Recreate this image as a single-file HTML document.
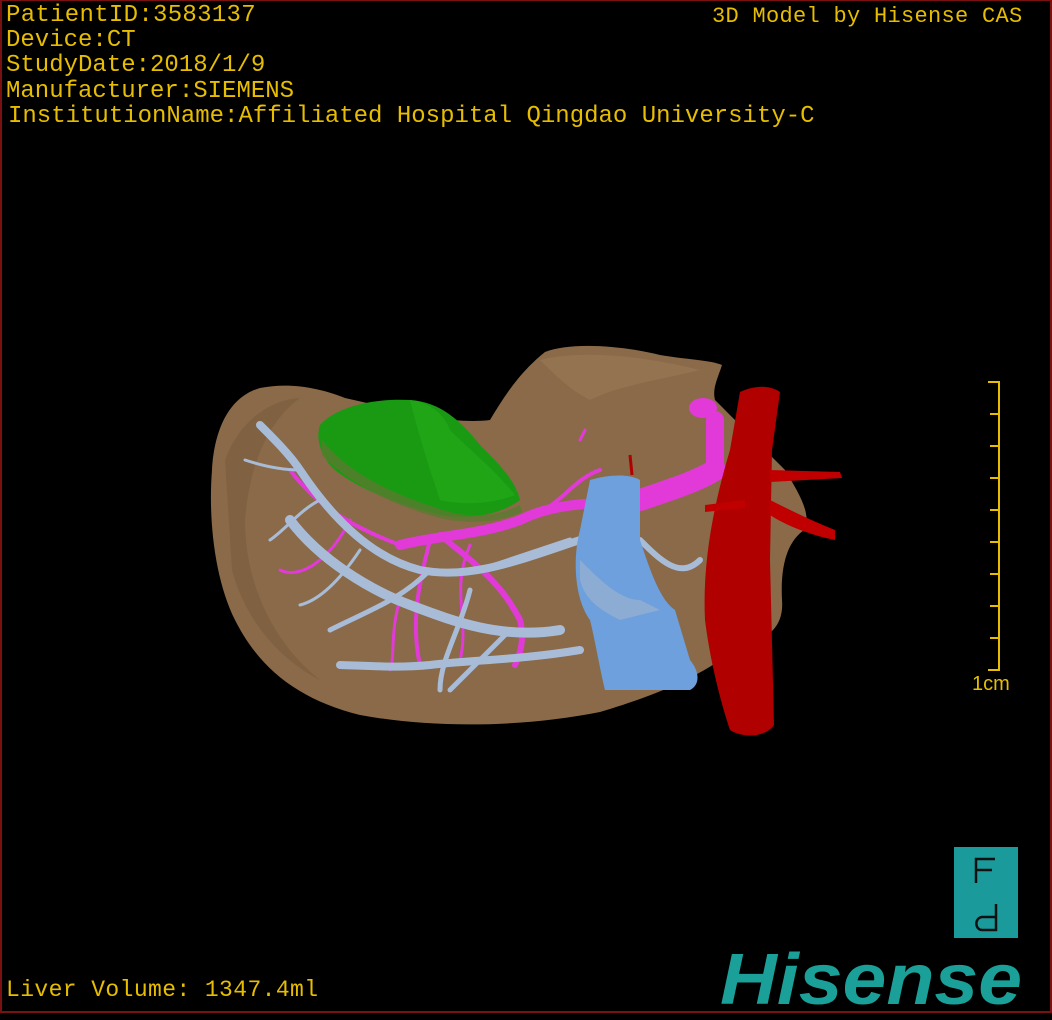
<!DOCTYPE html>
<html><head><style>
html,body{margin:0;padding:0;background:#000;}
#w{position:relative;width:1052px;height:1020px;overflow:hidden;background:#000;}
#f{position:absolute;left:0;top:0;width:1048px;height:1010px;border:2px solid #7a1010;border-top:1px solid #7a1010;}
.t{position:absolute;font-family:"Liberation Mono",monospace;color:#e6bd00;font-size:24px;line-height:25px;white-space:pre;}
</style></head><body><div id="w">
<svg width="1052" height="1020" style="position:absolute;left:0;top:0">
<path d="M212,470 C215,420 235,395 260,388 C290,382 320,388 345,398 C400,410 450,425 490,420 C505,395 520,372 545,352 C570,342 620,345 660,355 C690,360 710,360 722,365 C718,378 712,388 715,400 C740,425 765,450 785,470 C800,495 812,515 804,530 C790,540 780,560 782,600 C784,625 770,640 740,645 C700,680 640,700 600,712 C520,728 430,728 360,715 C300,700 260,670 235,620 C215,580 208,520 212,470 Z" fill="#8a6a48"/>
<path d="M225,460 C240,420 270,400 300,398 C270,420 250,460 245,520 C245,580 270,640 320,680 C280,660 245,620 232,570 Z" fill="#7a5c3e" opacity="0.6"/>
<path d="M540,360 C580,350 640,355 700,370 C660,380 620,385 590,400 C570,390 555,375 540,360Z" fill="#9a7a56" opacity="0.6"/>
<path d="M320,425 C335,408 370,398 410,400 C440,402 460,420 480,445 C500,465 515,480 520,500 C500,515 470,520 440,515 C400,505 360,490 335,470 C322,458 315,440 320,425 Z" fill="#1a9a12"/>
<path d="M410,400 C430,402 445,415 450,430 C470,450 495,470 515,495 C490,505 460,505 440,500 C430,470 420,440 410,400Z" fill="#20a818" opacity="0.8"/>
<path d="M322,440 C345,470 390,495 450,512 C470,518 500,516 520,505 L522,512 C500,522 470,525 440,518 C390,505 345,480 322,455Z" fill="#5a7a30" opacity="0.8"/>
<g stroke="#e23ad8" fill="none" stroke-linecap="round">
<path d="M640,500 C670,490 700,480 715,470" stroke-width="22"/>
<path d="M715,470 L715,420" stroke-width="18"/>
<ellipse cx="703" cy="408" rx="14" ry="10" fill="#e23ad8" stroke="none"/>
<path d="M640,500 C600,505 560,500 520,520 C480,535 440,535 400,545" stroke-width="10"/>
<path d="M440,535 C470,560 500,580 520,620 C525,640 520,655 515,665" stroke-width="6"/>
<path d="M430,540 C420,580 410,620 420,665" stroke-width="4"/>
<path d="M400,545 C360,530 320,510 290,470" stroke-width="4"/>
<path d="M470,545 C450,590 470,620 460,660" stroke-width="3"/>
<path d="M520,520 C560,510 570,480 600,470" stroke-width="4"/>
<path d="M350,520 C330,560 300,580 280,570" stroke-width="3"/>
<path d="M400,600 C390,630 395,660 390,670" stroke-width="3"/>
<path d="M580,440 L585,430" stroke-width="3"/>
</g>
<g stroke="#a8bcd8" fill="none" stroke-linecap="round">
<path d="M580,540 C520,560 470,580 420,570 C380,560 340,530 300,470 C290,455 275,440 260,425" stroke-width="8"/>
<path d="M560,630 C500,640 450,620 410,605 C370,590 320,560 290,520" stroke-width="10"/>
<path d="M580,650 C520,660 470,660 430,665 C400,668 370,666 340,665" stroke-width="8"/>
<path d="M430,570 C400,600 370,610 330,630" stroke-width="5"/>
<path d="M470,590 C460,630 440,660 440,690" stroke-width="5"/>
<path d="M510,630 C490,650 470,670 450,690" stroke-width="5"/>
<path d="M300,470 C280,470 260,465 245,460" stroke-width="3"/>
<path d="M320,500 C300,510 285,530 270,540" stroke-width="3"/>
<path d="M360,550 C340,580 320,600 300,605" stroke-width="3"/>
<path d="M480,570 C510,560 540,550 570,540" stroke-width="5"/>
<path d="M640,540 C660,560 680,580 700,560" stroke-width="6"/>
</g>
<path d="M590,480 C610,474 630,474 640,480 L640,540 C650,570 660,600 675,610 L690,660 C700,672 700,685 690,690 L605,690 C600,670 595,640 590,620 C575,600 572,560 580,530 Z" fill="#6da0dc"/>
<path d="M580,560 C600,580 620,600 640,600 L660,610 L620,620 C600,610 585,600 580,580Z" fill="#9ab0d0" opacity="0.7"/>
<path d="M740,392 C755,385 770,385 780,392 L772,450 L770,560 L774,725 C765,738 742,738 730,730 C720,700 710,660 705,620 C702,560 715,500 730,450 Z" fill="#b00000"/>
<path d="M770,470 L840,472 L842,478 L770,482Z" fill="#c00000"/>
<path d="M770,500 C790,510 810,520 835,530 L835,540 C810,535 785,525 770,515Z" fill="#c00000"/>
<path d="M705,505 L745,500 L745,508 L705,512Z" fill="#c00000"/>
<path d="M630,455 L632,475" stroke="#b00000" stroke-width="3"/>
<g stroke="#e6bd00" stroke-width="2">
<line x1="999" y1="381" x2="999" y2="671"/>
<line x1="988" y1="382" x2="999" y2="382"/>
<line x1="990" y1="414" x2="999" y2="414"/>
<line x1="990" y1="446" x2="999" y2="446"/>
<line x1="990" y1="478" x2="999" y2="478"/>
<line x1="990" y1="510" x2="999" y2="510"/>
<line x1="990" y1="542" x2="999" y2="542"/>
<line x1="990" y1="574" x2="999" y2="574"/>
<line x1="990" y1="606" x2="999" y2="606"/>
<line x1="990" y1="638" x2="999" y2="638"/>
<line x1="988" y1="670" x2="999" y2="670"/>
</g>
<text x="972" y="690" font-family="Liberation Sans,sans-serif" font-size="20" fill="#e6bd00">1cm</text>
<rect x="954" y="847" width="64" height="91" fill="#1a9a9a"/>
<g stroke="#111" stroke-width="2.5" fill="none">
<path d="M976,883 L976,859 L995,859 M976,870 L992,870"/>
<path d="M996,904 L996,930 L982,930 C975,930 974,918 982,917 L996,917"/>
</g>
<text x="720" y="1004" font-family="Liberation Sans,sans-serif" font-weight="bold" font-style="italic" font-size="72" fill="#1aa098" textLength="302" lengthAdjust="spacingAndGlyphs">Hisense</text>
</svg>
<div id="f"></div>
<div class="t" style="left:6px;top:3px;letter-spacing:0.3px">PatientID:3583137</div>
<div class="t" style="left:6px;top:28px">Device:CT</div>
<div class="t" style="left:6px;top:53px">StudyDate:2018/1/9</div>
<div class="t" style="left:6px;top:79px">Manufacturer:SIEMENS</div>
<div class="t" style="left:8px;top:104px;letter-spacing:0px">InstitutionName:Affiliated Hospital Qingdao University-C</div>
<div class="t" style="left:712px;top:4px;font-size:22px;letter-spacing:0.3px">3D Model by Hisense CAS</div>
<div class="t" style="left:6px;top:978px;font-size:23px;letter-spacing:0.4px">Liver Volume: 1347.4ml</div>
</div></body></html>
